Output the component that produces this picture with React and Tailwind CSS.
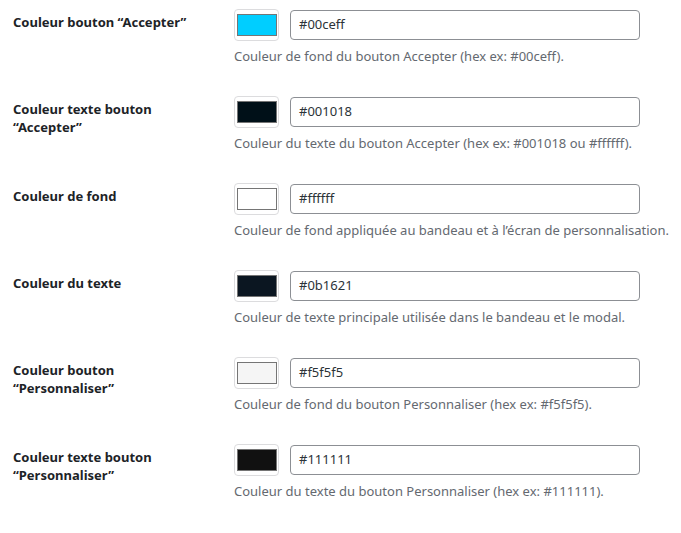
import React from "react";

const rows = [
  { label: ["Couleur bouton \u201cAccepter\u201d"], color: "#00ceff", desc: "Couleur de fond du bouton Accepter (hex ex: #00ceff)." },
  { label: ["Couleur texte bouton", "\u201cAccepter\u201d"], color: "#001018", desc: "Couleur du texte du bouton Accepter (hex ex: #001018 ou #ffffff)." },
  { label: ["Couleur de fond"], color: "#ffffff", desc: "Couleur de fond appliquée au bandeau et à l\u2019écran de personnalisation." },
  { label: ["Couleur du texte"], color: "#0b1621", desc: "Couleur de texte principale utilisée dans le bandeau et le modal." },
  { label: ["Couleur bouton", "\u201cPersonnaliser\u201d"], color: "#f5f5f5", desc: "Couleur de fond du bouton Personnaliser (hex ex: #f5f5f5)." },
  { label: ["Couleur texte bouton", "\u201cPersonnaliser\u201d"], color: "#111111", desc: "Couleur du texte du bouton Personnaliser (hex ex: #111111)." },
];

export default function App() {
  return (
    <div
      className="w-[681px] h-[533px] bg-white pl-[13px] pt-[9px] text-[13px]"
      style={{ fontFamily: '"Noto Sans", "Open Sans", sans-serif' }}
    >
      {rows.map((r) => (
        <div key={r.color} className="flex h-[87px]">
          <div className="w-[221px] pt-[4px] font-bold text-[#1d2327] leading-[18px]">
            {r.label.map((l) => (
              <div key={l}>{l}</div>
            ))}
          </div>
          <div className="flex flex-col">
            <div className="flex items-center gap-[11px]">
              <div className="w-[45px] h-[32px] rounded-[4px] border border-[#dcdcde] bg-white flex items-center justify-center">
                <div
                  className="w-[40px] h-[22px] border border-[#757575]"
                  style={{ backgroundColor: r.color }}
                />
              </div>
              <div className="w-[350px] h-[30px] rounded-[4px] border border-[#8c8f94] flex items-center px-[8px] text-[#2c3338]">
                {r.color}
              </div>
            </div>
            <div className="mt-[6px] text-[#646970] leading-[18px]">{r.desc}</div>
          </div>
        </div>
      ))}
    </div>
  );
}
